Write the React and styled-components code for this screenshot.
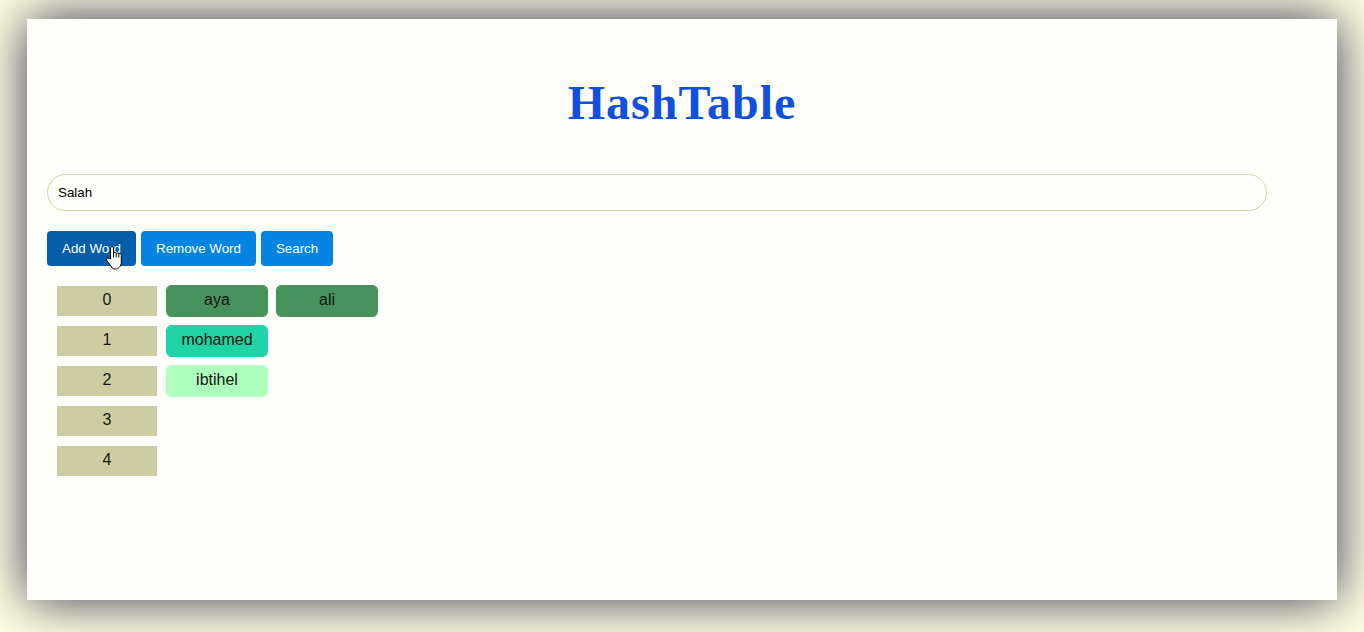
import React, { useState } from "react";
import styled, { createGlobalStyle } from "styled-components";

const GlobalStyle = createGlobalStyle`
  * { box-sizing: border-box; }
  body {
    margin: 0;
    background: #ffffe0;
    font-family: "Liberation Sans", Arial, sans-serif;
  }
`;

const Page = styled.div`
  min-height: 100vh;
  padding: 19px 27px 32px;
  display: flex;
  overflow: hidden;
`;

const Panel = styled.main`
  flex: 1;
  padding: 56px 20px 20px;
  background: #fefefa;
  box-shadow: 0 0 50px rgba(20, 10, 60, 0.85);
`;

const Title = styled.h1`
  margin: 0 0 43px;
  font: bold 48px/56px "Liberation Serif", "Times New Roman", serif;
  letter-spacing: 1px;
  text-align: center;
  color: #1150de;
`;

const WordInput = styled.input`
  display: block;
  width: calc(100% - 50px);
  height: 37px;
  padding: 0 10px;
  border: 1px solid #d4d4ac;
  border-radius: 20px;
  background: transparent;
  font-family: "Liberation Sans", Arial, sans-serif;
  color: #000;
  outline: none;
`;

const Toolbar = styled.div`
  display: flex;
  gap: 5px;
  margin: 20px 0 19px;
`;

const Button = styled.button`
  position: relative;
  height: 35px;
  padding: 0 15px;
  border: 0;
  border-radius: 4px;
  background: ${(p) => (p.$active ? "#045eaa" : "#0484e2")};
  color: #fff;
  font-family: "Liberation Sans", Arial, sans-serif;
  cursor: pointer;
`;

const Pointer = styled.svg`
  position: absolute;
  right: 13px;
  bottom: -5px;
  width: 18px;
  height: 26px;
`;

const Buckets = styled.ol`
  list-style: none;
  margin: 0;
  padding: 0 9px;
  display: grid;
  gap: 8px;
`;

const Bucket = styled.li`
  display: flex;
  align-items: center;
  gap: 8px;
  height: 32px;
`;

const Cell = styled.span`
  width: 102px;
  height: 32px;
  border: 1px solid transparent;
  background: ${(p) => p.$color} padding-box;
  font-size: 16px;
  line-height: 28px;
  text-align: center;
  color: #151510;
`;

const Word = styled(Cell)`
  border-color: ${(p) => p.$color};
  border-radius: 5px;
`;

const buckets = [
  [{ text: "aya", color: "#46925c" }, { text: "ali", color: "#46925c" }],
  [{ text: "mohamed", color: "#20d4a5" }],
  [{ text: "ibtihel", color: "#afffbe" }],
  [],
  [],
];

export default function App() {
  const [word, setWord] = useState("Salah");
  return (
    <Page>
      <GlobalStyle />
      <Panel>
        <Title>HashTable</Title>
        <WordInput aria-label="Word" value={word} onChange={(e) => setWord(e.target.value)} />
        <Toolbar>
          <Button type="button" $active>
            Add Word
            <Pointer viewBox="0 0 18 26" aria-hidden="true">
              <path
                d="M5.500 14V3a1.500 1.500 0 0 1 3 0V8.500a1.400 1.400 0 0 1 2.700 0 1.400 1.400 0 0 1 2.500.800 1.400 1.400 0 0 1 2.600.900V17c0 2.500-.800 4-2 5.200-1 1.200-2.300 1.800-4 1.800H9.800c-1.600 0-2.500-.700-3.200-2L1.800 15.500c-1.200-1.800.600-3.300 2.200-2.200z"
                fill="#fff" stroke="#000" strokeLinejoin="round"
              />
              <path d="M8.500 8V12.500M11.200 8.500V12.500M13.800 9.500V12.500" fill="none" stroke="#000" />
            </Pointer>
          </Button>
          <Button type="button">Remove Word</Button>
          <Button type="button">Search</Button>
        </Toolbar>
        <Buckets>
          {buckets.map((words, index) => (
            <Bucket key={index}>
              <Cell $color="#cdcda3">{index}</Cell>
              {words.map((item) => (
                <Word key={item.text} $color={item.color}>{item.text}</Word>
              ))}
            </Bucket>
          ))}
        </Buckets>
      </Panel>
    </Page>
  );
}
